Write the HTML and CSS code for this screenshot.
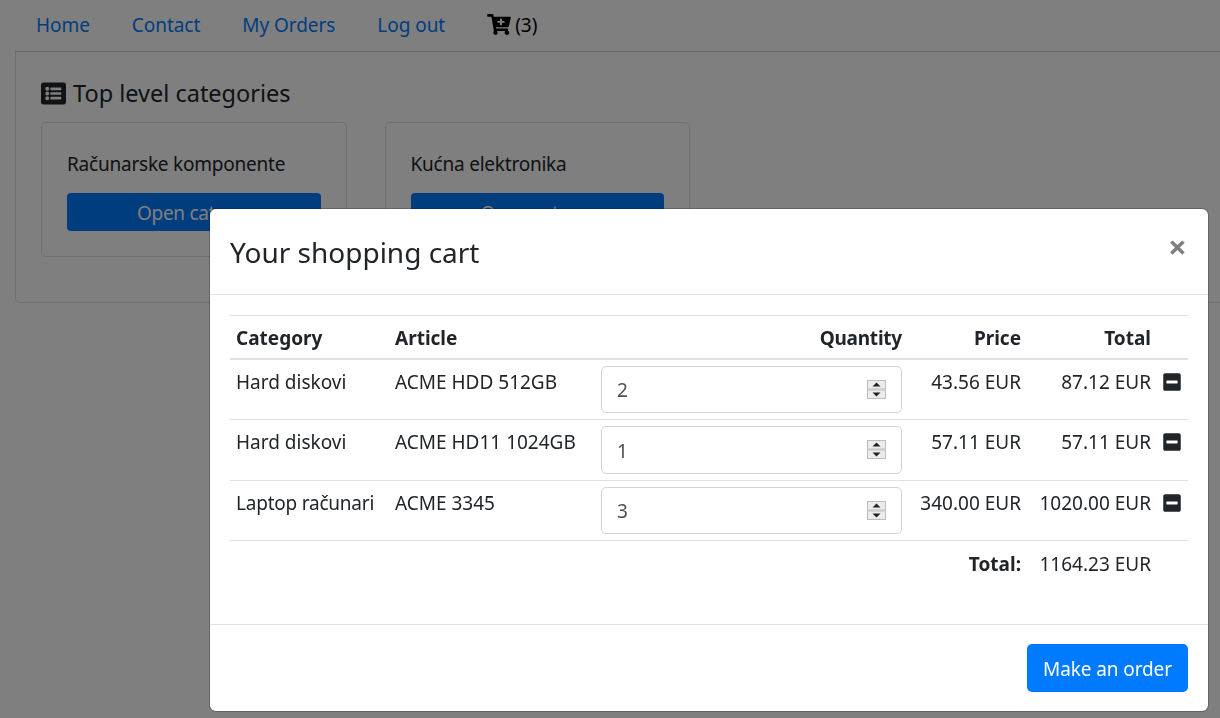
FILE: index.html
```html
<!DOCTYPE html>
<html lang="en">
<head>
<meta charset="utf-8">
<title>Shopping cart</title>
<link rel="stylesheet" href="styles.css">
</head>
<body>
<div class="page">
  <nav class="nav">
    <a class="nav-link" href="#">Home</a>
    <a class="nav-link" href="#">Contact</a>
    <a class="nav-link" href="#">My Orders</a>
    <a class="nav-link" href="#">Log out</a>
    <span class="nav-cart">
      <svg class="cart-icon" viewBox="0 0 576 512"><path d="M504.717 320H211.572l6.545 32h268.418c15.401 0 26.816 14.301 23.403 29.319l-5.517 24.276C523.112 414.668 536 433.828 536 456c0 31.202-25.519 56.573-56.747 56-30.15-.548-54.729-25.101-55.244-55.25-.306-17.926 7.609-33.927 20.203-44.75H234.791c11.942 10.232 19.646 25.224 20.158 42.106.878 29.04-22.497 54.094-51.55 54.94-31.062.905-56.4-23.95-56.4-55.046 0-15.22 6.148-29.011 16.09-39.023L103.04 64H24C10.745 64 0 53.255 0 40V24C0 10.745 10.745 0 24 0h102.529c11.401 0 21.228 8.021 23.513 19.19L159.208 64H551.99c15.401 0 26.816 14.301 23.403 29.319l-47.273 208C525.637 312.246 515.923 320 504.717 320zM408 168h-48v-40c0-8.837-7.163-16-16-16h-16c-8.837 0-16 7.163-16 16v40h-48c-8.837 0-16 7.163-16 16v16c0 8.837 7.163 16 16 16h48v40c0 8.837 7.163 16 16 16h16c8.837 0 16-7.163 16-16v-40h48c8.837 0 16-7.163 16-16v-16c0-8.837-7.163-16-16-16z"/></svg>
      <span>(3)</span>
    </span>
  </nav>
  <section class="card">
    <h2 class="card-title">
      <svg class="list-icon" viewBox="0 0 512 512"><path d="M464 480H48c-26.51 0-48-21.49-48-48V80c0-26.51 21.49-48 48-48h416c26.51 0 48 21.49 48 48v352c0 26.51-21.49 48-48 48zM128 120c-22.091 0-40 17.909-40 40s17.909 40 40 40 40-17.909 40-40-17.909-40-40-40zm0 96c-22.091 0-40 17.909-40 40s17.909 40 40 40 40-17.909 40-40-17.909-40-40-40zm0 96c-22.091 0-40 17.909-40 40s17.909 40 40 40 40-17.909 40-40-17.909-40-40-40zm288-136v-32c0-6.627-5.373-12-12-12H204c-6.627 0-12 5.373-12 12v32c0 6.627 5.373 12 12 12h200c6.627 0 12-5.373 12-12zm0 96v-32c0-6.627-5.373-12-12-12H204c-6.627 0-12 5.373-12 12v32c0 6.627 5.373 12 12 12h200c6.627 0 12-5.373 12-12zm0 96v-32c0-6.627-5.373-12-12-12H204c-6.627 0-12 5.373-12 12v32c0 6.627 5.373 12 12 12h200c6.627 0 12-5.373 12-12z"/></svg>
      <span>Top level categories</span>
    </h2>
    <div class="cat-row">
      <div class="cat-card">
        <div class="cat-name">Računarske komponente</div>
        <a class="cat-btn" href="#">Open category</a>
      </div>
      <div class="cat-card">
        <div class="cat-name">Kućna elektronika</div>
        <a class="cat-btn" href="#">Open category</a>
      </div>
    </div>
  </section>
</div>

<div class="backdrop"></div>

<div class="modal">
  <header class="modal-header">
    <h3 class="modal-title">Your shopping cart</h3>
    <span class="close">×</span>
  </header>
  <div class="modal-body">
    <table class="cart">
      <colgroup>
        <col class="c-cat"><col class="c-art"><col class="c-qty"><col class="c-price"><col class="c-total"><col class="c-act">
      </colgroup>
      <thead>
        <tr><th>Category</th><th>Article</th><th class="num tight">Quantity</th><th class="num">Price</th><th class="num">Total</th><th></th></tr>
      </thead>
      <tbody>
        <tr>
          <td>Hard diskovi</td><td>ACME HDD 512GB</td>
          <td class="qty-cell"><div class="qty"><input type="number" value="2" class="qty-input"><svg class="spin" viewBox="0 0 19 19"><rect x=".5" y=".5" width="18" height="8.5"/><rect x=".5" y="10" width="18" height="8.5"/><path class="arrow" d="M9.5 2.5l4 4h-8zM5.5 12.5h8l-4 4z"/></svg></div></td>
          <td class="num">43.56 EUR</td><td class="num">87.12 EUR</td>
          <td class="act"><svg class="minus" viewBox="0 0 448 512"><path d="M400 32H48C21.5 32 0 53.5 0 80v352c0 26.5 21.5 48 48 48h352c26.5 0 48-21.5 48-48V80c0-26.5-21.5-48-48-48zM92 296c-6.6 0-12-5.4-12-12v-56c0-6.6 5.4-12 12-12h264c6.6 0 12 5.4 12 12v56c0 6.6-5.4 12-12 12H92z"/></svg></td>
        </tr>
        <tr>
          <td>Hard diskovi</td><td>ACME HD11 1024GB</td>
          <td class="qty-cell"><div class="qty"><input type="number" value="1" class="qty-input"><svg class="spin" viewBox="0 0 19 19"><rect x=".5" y=".5" width="18" height="8.5"/><rect x=".5" y="10" width="18" height="8.5"/><path class="arrow" d="M9.5 2.5l4 4h-8zM5.5 12.5h8l-4 4z"/></svg></div></td>
          <td class="num">57.11 EUR</td><td class="num">57.11 EUR</td>
          <td class="act"><svg class="minus" viewBox="0 0 448 512"><path d="M400 32H48C21.5 32 0 53.5 0 80v352c0 26.5 21.5 48 48 48h352c26.5 0 48-21.5 48-48V80c0-26.5-21.5-48-48-48zM92 296c-6.6 0-12-5.4-12-12v-56c0-6.6 5.4-12 12-12h264c6.6 0 12 5.4 12 12v56c0 6.6-5.4 12-12 12H92z"/></svg></td>
        </tr>
        <tr>
          <td class="tight">Laptop računari</td><td>ACME 3345</td>
          <td class="qty-cell"><div class="qty"><input type="number" value="3" class="qty-input"><svg class="spin" viewBox="0 0 19 19"><rect x=".5" y=".5" width="18" height="8.5"/><rect x=".5" y="10" width="18" height="8.5"/><path class="arrow" d="M9.5 2.5l4 4h-8zM5.5 12.5h8l-4 4z"/></svg></div></td>
          <td class="num">340.00 EUR</td><td class="num">1020.00 EUR</td>
          <td class="act"><svg class="minus" viewBox="0 0 448 512"><path d="M400 32H48C21.5 32 0 53.5 0 80v352c0 26.5 21.5 48 48 48h352c26.5 0 48-21.5 48-48V80c0-26.5-21.5-48-48-48zM92 296c-6.6 0-12-5.4-12-12v-56c0-6.6 5.4-12 12-12h264c6.6 0 12 5.4 12 12v56c0 6.6-5.4 12-12 12H92z"/></svg></td>
        </tr>
      </tbody>
      <tfoot>
        <tr><td colspan="3"></td><td class="num strong">Total:</td><td class="num">1164.23 EUR</td><td></td></tr>
      </tfoot>
    </table>
  </div>
  <footer class="modal-footer">
    <a class="order-btn" href="#">Make an order</a>
  </footer>
</div>
</body>
</html>
```
FILE: styles.css
```css
* { box-sizing: border-box; }
html, body { margin: 0; height: 100%; overflow: hidden; }
body {
  font-family: "Noto Sans", "Liberation Sans", sans-serif;
  font-size: 19px;
  line-height: 30px;
  color: #212529;
  background: #fff;
}
a { text-decoration: none; }

.page { width: 1205px; padding-left: 15px; }

.nav {
  display: flex;
  align-items: center;
  height: 52px;
  gap: 2px;
  padding: 0 0 2px 2px;
  margin-right: -200px;
  border-bottom: 1px solid #c9cdd1;
}
.nav-link { padding: 10px 20px; color: #007bff; letter-spacing: -.05px; }
.nav-link:first-child { margin-left: -1px; }
.nav-cart { display: flex; align-items: center; gap: 4px; padding: 0 20px; color: #000; }
.cart-icon { width: 24px; height: 21px; fill: #000; }

.card {
  width: 1400px;
  height: 251px;
  padding: 25px;
  border: 1px solid rgba(0,0,0,.125);
  border-top: 0;
  border-radius: 0 0 5px 5px;
}
.card-title {
  display: flex;
  align-items: center;
  gap: 7px;
  margin: 0 0 13px;
  font-size: 23.5px;
  font-weight: 400;
  line-height: 30px;
  height: 32px;
}
.list-icon { width: 25px; height: 25px; fill: #212529; }

.cat-row { display: flex; gap: 38px; }
.cat-card {
  width: 305.5px;
  height: 135px;
  padding: 26px 25px;
  border: 1px solid rgba(0,0,0,.125);
  border-radius: 5px;
}
.cat-name { height: 44px; letter-spacing: -.22px; }
.cat-btn {
  display: block;
  height: 38px;
  line-height: 40px;
  padding-left: 70px;
  color: #fff;
  background: #007bff;
  border-radius: 4px;
  letter-spacing: -.3px;
}

.backdrop { position: fixed; inset: 0; background: rgba(0,0,0,.5); }

.modal {
  position: absolute;
  left: 210px;
  top: 209px;
  width: 998px;
  height: 502px;
  display: flex;
  flex-direction: column;
  background: #fff;
  border-radius: 6px;
  box-shadow: 0 0 0 1px rgba(0,0,0,.2);
}
.modal-header {
  display: flex;
  align-items: center;
  justify-content: space-between;
  height: 86px;
  padding: 0 20px;
  border-bottom: 1px solid #dee2e6;
}
.modal-title { margin: 0; font-size: 28px; font-weight: 400; padding-top: 1px; }
.close { font-size: 33px; font-weight: 700; color: #7f7f7f; line-height: 30px; margin: -10px 1px 0 0; }

.modal-body { flex: 1; padding: 20px 20px 0; }
.cart { width: 958px; border-collapse: collapse; table-layout: fixed; }
.c-cat { width: 159px; }
.c-art { width: 206px; }
.c-qty { width: 313px; }
.c-price { width: 119px; }
.c-total { width: 130px; }
.c-act { width: 31px; }
.cart th, .cart td { padding: 7px 6px 6px; vertical-align: top; text-align: left; white-space: nowrap; }
.cart thead th { height: 43px; padding-bottom: 4px; border-top: 1px solid #dee2e6; border-bottom: 2px solid #dee2e6; font-weight: 700; }
.cart tbody td { height: 60.5px; border-bottom: 1px solid #dee2e6; }
.cart tbody td.qty-cell { padding: 6px; }
.cart tfoot td { height: 48px; padding-top: 8px; }
.cart .num { text-align: right; }
.strong { font-weight: 700; }
.cart .tight { letter-spacing: -.22px; }

.qty { position: relative; }
.qty-input {
  display: block;
  width: 100%;
  height: 47.5px;
  padding: 2px 15px 0;
  font: inherit;
  font-size: 19px;
  color: #495057;
  background: #fff;
  border: 1px solid #ced4da;
  border-radius: 5px;
  appearance: textfield;
}
.qty-input::-webkit-inner-spin-button, .qty-input::-webkit-outer-spin-button { appearance: none; margin: 0; }
.spin { position: absolute; right: 16px; top: 14px; width: 19px; height: 19px; }
.spin rect { fill: #ececec; stroke: #bdbdbd; }
.spin .arrow { fill: #222; }

.cart tbody td.act { padding-top: 6px; }
.minus { display: block; width: 18px; height: 20px; margin-top: 6px; fill: #212529; }

.modal-footer {
  display: flex;
  justify-content: flex-end;
  align-items: center;
  height: 87px;
  padding: 0 20px;
  border-top: 1px solid #dee2e6;
}
.order-btn {
  display: block;
  width: 161px;
  height: 48px;
  line-height: 50px;
  text-align: center;
  color: #fff;
  background: #007bff;
  border-radius: 5px;
  letter-spacing: -.1px;
}
```
